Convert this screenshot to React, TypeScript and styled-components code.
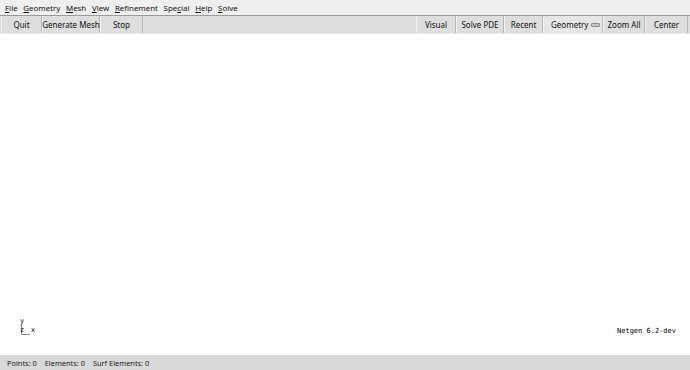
import React, { FC } from "react";
import styled, { createGlobalStyle } from "styled-components";

const GlobalStyle = createGlobalStyle`
  html, body {
    margin: 0;
    padding: 0;
    background: #ffffff;
  }
  body {
    font-family: "Noto Sans", "DejaVu Sans", sans-serif;
  }
`;

const Window = styled.div`
  width: 690px;
  height: 370px;
  display: flex;
  flex-direction: column;
  background: #ffffff;
  overflow: hidden;
`;

const MenuBar = styled.div`
  height: 15px;
  display: flex;
  align-items: center;
  padding-left: 5px;
  background: #efefef;
  border-bottom: 1px solid #9a9a9a;
  font-size: 7.9px;
  color: #111;
`;

const MenuItem = styled.span`
  margin-right: 5.7px;
  white-space: nowrap;
`;

const Key = styled.span`
  text-decoration: underline;
`;

const ToolBar = styled.div`
  height: 17px;
  display: flex;
  background: #dedede;
  border-bottom: 1px solid #ececec;
  padding: 0 2px 0 1px;
`;

const Group = styled.div`
  display: flex;
`;

const Spacer = styled.div`
  flex: 1;
`;

const ToolButton = styled.div<{ $w: number }>`
  width: ${(p) => p.$w}px;
  flex-shrink: 0;
  height: 100%;
  box-sizing: border-box;
  display: flex;
  align-items: center;
  justify-content: center;
  border-left: 1px solid #f4f4f4;
  border-right: 1px solid #b6b6b6;
  font-size: 8px;
  color: #111;
  white-space: nowrap;
`;

const Select = styled(ToolButton)`
  justify-content: space-between;
  padding: 0 3px 0 7px;
  background: #e6e6e6;
`;

const Indicator = styled.span`
  flex-shrink: 0;
  width: 7px;
  height: 2px;
  margin-left: 3px;
  background: #c4c4c4;
  border: 1px solid #8e8e8e;
  border-radius: 1px;
`;

const Canvas = styled.div`
  flex: 1;
  display: flex;
  align-items: flex-end;
  justify-content: space-between;
  padding: 0 14px 19px 20px;
  background: #ffffff;
`;

const Axes = styled.div`
  width: 20px;
  height: 18px;
  position: relative;
  font-family: "DejaVu Sans Mono", monospace;
  font-size: 7px;
  color: #000;
`;

const AxisLabel = styled.span<{ $x: number; $y: number }>`
  position: absolute;
  left: ${(p) => p.$x}px;
  top: ${(p) => p.$y}px;
  line-height: 1;
`;

const Version = styled.div`
  font-family: "DejaVu Sans Mono", monospace;
  font-size: 7px;
  color: #000;
  padding-bottom: 1px;
`;

const StatusBar = styled.div`
  height: 15px;
  display: flex;
  align-items: center;
  padding-left: 7px;
  background: #d9d9d9;
  font-size: 7.4px;
  color: #222;
`;

const StatusItem = styled.span`
  margin-right: 8px;
`;

const App: FC = () => {
  return (
    <Window>
      <GlobalStyle />
      <MenuBar>
        <MenuItem><Key>F</Key>ile</MenuItem>
        <MenuItem><Key>G</Key>eometry</MenuItem>
        <MenuItem><Key>M</Key>esh</MenuItem>
        <MenuItem><Key>V</Key>iew</MenuItem>
        <MenuItem><Key>R</Key>efinement</MenuItem>
        <MenuItem>Spe<Key>c</Key>ial</MenuItem>
        <MenuItem><Key>H</Key>elp</MenuItem>
        <MenuItem><Key>S</Key>olve</MenuItem>
      </MenuBar>
      <ToolBar>
        <Group>
          <ToolButton $w={41}>Quit</ToolButton>
          <ToolButton $w={58}>Generate Mesh</ToolButton>
          <ToolButton $w={43}>Stop</ToolButton>
        </Group>
        <Spacer />
        <Group>
          <ToolButton $w={40}>Visual</ToolButton>
          <ToolButton $w={48}>Solve PDE</ToolButton>
          <ToolButton $w={39}>Recent</ToolButton>
          <Select $w={60}>
            Geometry <Indicator />
          </Select>
          <ToolButton $w={42}>Zoom All</ToolButton>
          <ToolButton $w={43}>Center</ToolButton>
        </Group>
      </ToolBar>
      <Canvas>
        <Axes>
          <svg width="20" height="18" style={{ position: "absolute", left: 0, top: 0 }}>
            <line x1="1.5" y1="6" x2="1.5" y2="16.5" stroke="#888" strokeWidth="1" />
            <line x1="1.5" y1="16.5" x2="10" y2="16.5" stroke="#888" strokeWidth="1" />
          </svg>
          <AxisLabel $x={0} $y={0}>y</AxisLabel>
          <AxisLabel $x={0} $y={9}>z</AxisLabel>
          <AxisLabel $x={11} $y={9}>x</AxisLabel>
        </Axes>
        <Version>Netgen 6.2-dev</Version>
      </Canvas>
      <StatusBar>
        <StatusItem>Points: 0</StatusItem>
        <StatusItem>Elements: 0</StatusItem>
        <StatusItem>Surf Elements: 0</StatusItem>
      </StatusBar>
    </Window>
  );
};

export default App;
